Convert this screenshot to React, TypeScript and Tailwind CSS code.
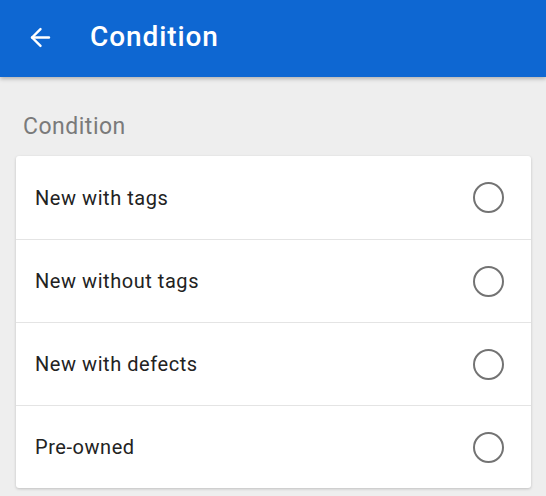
import { ArrowLeft } from "lucide-react";

const options = ["New with tags", "New without tags", "New with defects", "Pre-owned"];

export default function App() {
  return (
    <div className="w-[546px] h-[496px] bg-[#eeeeee] overflow-hidden" style={{ fontFamily: "Roboto, 'Noto Sans', sans-serif" }}>
      {/* 상단 바 */}
      <header className="h-[77px] bg-[#0e67d2] flex items-center pb-[3px] shadow-[0_2px_4px_rgba(0,0,0,0.25)] relative z-10">
        <ArrowLeft className="ml-[26px] text-white" size={29} strokeWidth={2} />
        <h1 className="ml-[35px] text-white text-[28px] font-medium tracking-[0.9px]">Condition</h1>
      </header>

      <div className="px-4">
        <p className="pl-[7px] pt-[37px] pb-[16px] text-[#7a7a7a] text-[23px] leading-[26px] tracking-[0.5px]">Condition</p>

        {/* 옵션 카드 */}
        <div className="w-[515px] bg-white rounded-[3px] shadow-[0_1px_3px_rgba(0,0,0,0.2)]">
          {options.map((label, i) => (
            <div
              key={label}
              className={`h-[83px] flex items-center justify-between pl-[19px] pr-[27px] ${i > 0 ? "border-t border-[#e4e4e4]" : ""}`}
            >
              <span className="text-[20px] text-[#222222] tracking-[0.55px]">{label}</span>
              <span className="w-[31px] h-[31px] rounded-full border-[2.5px] border-[#737373]" />
            </div>
          ))}
        </div>
      </div>
    </div>
  );
}
